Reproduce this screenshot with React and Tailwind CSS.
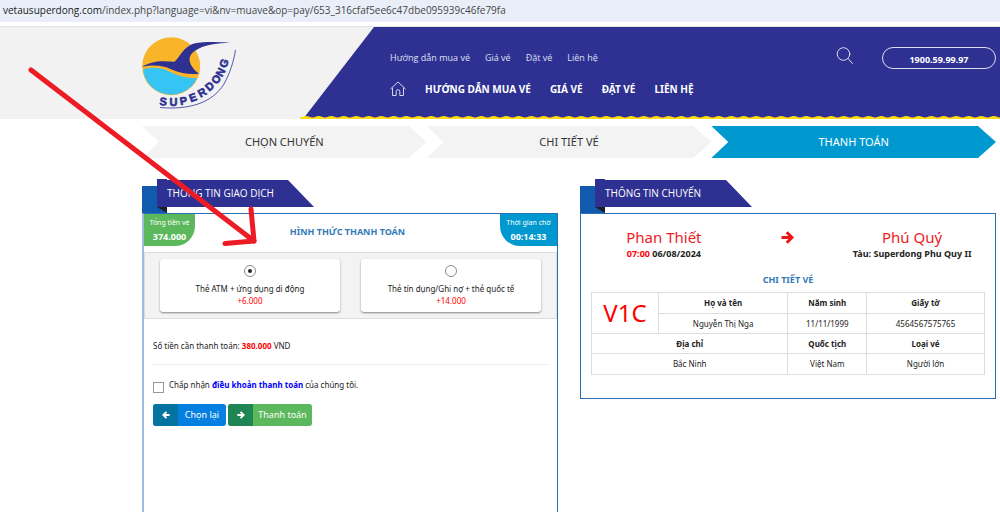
import React from "react";

function Logo() {
  return (
    <svg viewBox="0 0 120 85" className="h-[85px] w-[120px]" role="img" aria-label="Superdong">
      <defs>
        <clipPath id="sun">
          <circle cx="41.2" cy="36.3" r="28.4" />
        </clipPath>
      </defs>
      <circle cx="41.2" cy="36.3" r="29" fill="#f9b52a" />
      <path
        clipPath="url(#sun)"
        d="M10 41 C18 37 28 36.500 37 40.500 C46 45 55 48.500 67.500 48.200 L72 48 L66 72 L8 72 Z"
        fill="#35c4f3"
      />
      <path
        d="M12 36.800 C20 32 29 30 44.500 31.800 C50 27 53 17 64 13.500 C74 11.500 88 11.800 99.800 12.600 C88 13.700 77 14.500 69 18.500 C56 24.500 57 34 69 43.800 C58 45 49 42.500 41 39.200 C33 35.500 24 34.500 12 36.800 Z"
        fill="#2e3192"
      />
      <path
        d="M30 77.500 C58 80 82 73.500 94 54 C100 43 103.500 32 105.500 20"
        fill="none"
        stroke="#2e3192"
        strokeWidth=".8"
      />
      <text
        x="29.2 39.600 50.600 60.800 70.500 79.200 86.500 92 96.200"
        y="75 76 75.200 72.200 67.800 61.800 55 47.500 38.500"
        rotate="5 0 -10 -20 -30 -42 -52 -62 -72"
        fill="#2e3192"
        stroke="#2e3192"
        strokeWidth=".6"
        className="font-['Liberation_Sans_Narrow','Liberation_Sans',sans-serif] text-[11px] font-bold"
      >
        SUPERDONG
      </text>
    </svg>
  );
}

function HomeIcon() {
  return (
    <svg viewBox="0 0 16 16" className="size-4" fill="none" stroke="#d5d6ee" strokeWidth="1" strokeLinejoin="round" strokeLinecap="round">
      <path d="M.7 7.800 8 1 15.300 7.800" />
      <path d="M2.500 7v7.500h3.700V10.500a1.800 1.800 0 0 1 3.600 0V14.500h3.700V7" />
    </svg>
  );
}

function SearchIcon() {
  return (
    <svg viewBox="0 0 18 18" className="size-[18px]" fill="none" stroke="#dcdcf2" strokeWidth="1" strokeLinecap="round">
      <circle cx="7.500" cy="7" r="6.300" />
      <path d="M12 11.500 16.500 16.500" />
    </svg>
  );
}

function BoldArrow({ className }) {
  return (
    <svg viewBox="0 0 12 12" className={className} fill="none" stroke="currentColor" strokeWidth="2.8">
      <path d="M.5 6H10M5.300 1.200 10.100 6 5.300 10.800" />
    </svg>
  );
}

function WaveStrip() {
  return (
    <svg className="absolute bottom-0 left-[300px] right-0 h-[3px] w-full" aria-hidden="true">
      <defs>
        <pattern id="wave" width="12.5" height="3" patternUnits="userSpaceOnUse">
          <path d="M0 1.500 C2.500 1.500 3.500 0 6.250 0 C9 0 10 1.500 12.500 1.500 V3 H0 Z" fill="#fddc10" />
        </pattern>
      </defs>
      <rect width="100%" height="3" fill="url(#wave)" />
    </svg>
  );
}

function Header() {
  const small = ["Hướng dẫn mua vé", "Giá vé", "Đặt vé", "Liên hệ"];
  const main = ["HƯỚNG DẪN MUA VÉ", "GIÁ VÉ", "ĐẶT VÉ", "LIÊN HỆ"];
  return (
    <header className="relative flex h-[93px] overflow-hidden border-t border-[#e2e2e2] bg-[#f2f2f2]">
      <a href="#home" className="w-[303px] shrink-0 pl-[130px] pt-[3px]">
        <Logo />
      </a>
      <div className="flex flex-1 justify-between bg-[#2e3192] pl-[87px] pr-1 text-white [clip-path:polygon(71px_0,100%_0,100%_100%,0_100%)]">
        <nav className="flex flex-col pt-[23px]">
          <ul className="flex h-4 items-center gap-[15px] font-['Open_Sans','Noto_Sans',sans-serif] text-[9px] text-[#dfe0f2]">
            {small.map((t) => (
              <li key={t}>
                <a href="#menu">{t}</a>
              </li>
            ))}
          </ul>
          <ul className="mt-[15px] flex h-4 items-center gap-[19px] text-[10px] font-bold">
            <li>
              <a href="#home" aria-label="Trang chủ">
                <HomeIcon />
              </a>
            </li>
            {main.map((t) => (
              <li key={t}>
                <a href="#menu">{t}</a>
              </li>
            ))}
          </ul>
        </nav>
        <div className="flex items-start gap-7 pt-5">
          <button type="button" aria-label="Tìm kiếm">
            <SearchIcon />
          </button>
          <a
            href="tel:1900599997"
            className="flex h-[22px] w-[114px] items-center justify-center rounded-full border border-[#dcdcf2] pt-1 text-[9px] font-bold"
          >
            1900.59.99.97
          </a>
        </div>
      </div>
      <WaveStrip />
    </header>
  );
}

function Steps() {
  const steps = [
    ["CHỌN CHUYẾN", "bg-[#f3f3f3] text-[#333]"],
    ["CHI TIẾT VÉ", "bg-[#f3f3f3] text-[#333]"],
    ["THANH TOÁN", "bg-[#0099cf] text-white"],
  ];
  return (
    <ol className="grid grid-cols-3">
      {steps.map(([t, c]) => (
        <li
          key={t}
          className={
            "flex h-8 items-center justify-center text-[11px] [clip-path:polygon(0_0,calc(100%_-_18px)_0,100%_50%,calc(100%_-_18px)_100%,0_100%,17px_50%)] " + c
          }
        >
          {t}
        </li>
      ))}
    </ol>
  );
}

function Ribbon({ children }) {
  return (
    <div className="flex h-[34px] items-end">
      <div className="h-[27px] w-[15px] bg-[#125aad]" />
      <div className="self-start">
        <h2 className="flex h-7 w-[157px] items-center bg-[#2e3192] pl-[10px] font-['Open_Sans','Noto_Sans',sans-serif] text-[10px] text-white [clip-path:polygon(0_0,10px_0,10px_1px,131px_1px,100%_100%,0_100%)]">
          {children}
        </h2>
        <div className="flex h-[6px] w-[10px] bg-[#125aad]">
          <div className="w-full bg-[#1d1d25] [clip-path:polygon(0_0,100%_0,100%_100%)]" />
        </div>
      </div>
    </div>
  );
}

function PayOption({ name, fee, checked }) {
  return (
    <label className="flex h-[53px] flex-1 flex-col items-center rounded-[3px] bg-white pt-[6px] text-[8px] shadow-[0_1px_2px_rgba(0,0,0,0.45)]">
      <input
        type="radio"
        name="method"
        defaultChecked={checked}
        className="grid size-3 appearance-none place-content-center rounded-full border border-[#8a8a8a] bg-white before:size-1 before:rounded-full checked:before:bg-[#222]"
      />
      <span className="mt-[6px] h-3 leading-3">{name}</span>
      <span className="h-3 leading-3 text-[#ff0000]">{fee}</span>
    </label>
  );
}

function Payment() {
  return (
    <section className="flex flex-col">
      <Ribbon>THÔNG TIN GIAO DỊCH</Ribbon>
      <div className="flex-1 border-l-2 border-r border-t border-l-[#9dbce0] border-r-[#2a6fb5] border-t-[#2a6fb5]">
        <div className="flex h-8 justify-between">
          <div className="flex w-[51px] flex-col items-center rounded-br-[20px] bg-[#5cb85c] pt-[2px] text-white">
            <span className="text-[7px] leading-[14px]">Tổng tiền vé</span>
            <b className="text-[9px] leading-[14px]">374.000</b>
          </div>
          <h3 className="self-center pt-1 text-[9px] font-bold text-[#337ab7]">HÌNH THỨC THANH TOÁN</h3>
          <div className="flex w-[57px] flex-col items-center rounded-bl-[20px] bg-[#0099cf] pt-[2px] text-white">
            <span className="text-[7px] leading-[14px]">Thời gian chờ</span>
            <b className="text-[9px] leading-[14px]">00:14:33</b>
          </div>
        </div>
        <div className="mt-[6px] flex gap-[21px] border border-[#ddd] bg-[#f3f3f3] px-[15px] py-[6px]">
          <PayOption name="Thẻ ATM + ứng dụng di động" fee="+6.000" checked />
          <PayOption name="Thẻ tín dụng/Ghi nợ + thẻ quốc tế" fee="+14.000" />
        </div>
        <div className="px-[9px] pt-[21px] text-[8px]">
          <p className="h-3 leading-3">
            Số tiền cần thanh toán: <b className="text-[#ff0000]">380.000</b> VND
          </p>
          <hr className="mt-3 border-[#eee]" />
          <div className="mt-[14px] flex h-4 gap-[5px]">
            <input id="agree" type="checkbox" className="mt-[3px] size-[11px] appearance-none border border-[#999] bg-white checked:bg-[#555]" />
            <label htmlFor="agree" className="leading-3">
              Chấp nhận{" "}
              <a href="#terms" className="font-bold text-[#0000ff]">
                điều khoản thanh toán
              </a>{" "}
              của chúng tôi.
            </label>
          </div>
          <div className="mt-[9px] flex gap-[2px] text-[9px] text-white">
            <button type="button" className="flex h-[22px] items-center overflow-hidden rounded-[3px] bg-[#0580e0]">
              <span className="grid h-full w-[25px] place-items-center bg-[#04739f]">
                <BoldArrow className="size-2 rotate-180" />
              </span>
              <span className="w-12 text-center">Chọn lại</span>
            </button>
            <button type="button" className="flex h-[22px] items-center overflow-hidden rounded-[3px] bg-[#5cb85c]">
              <span className="grid h-full w-[25px] place-items-center bg-[#1f8555]">
                <BoldArrow className="size-2" />
              </span>
              <span className="w-[59px] text-center">Thanh toán</span>
            </button>
          </div>
        </div>
      </div>
    </section>
  );
}

function Trip() {
  return (
    <section className="self-start">
      <Ribbon>THÔNG TIN CHUYẾN</Ribbon>
      <div className="border border-[#2a6fb5] px-[10px] pb-[23px] pt-[13px]">
        <div className="grid grid-cols-[37%_26%_37%] text-center text-[9px] font-bold">
          <div>
            <p className="text-[15px] font-normal leading-5 text-[#ed1c24]">Phan Thiết</p>
            <p className="leading-[14px]">
              <span className="text-[#ff0000]">07:00</span> 06/08/2024
            </p>
          </div>
          <div className="flex justify-center pt-1 text-[#f01414]">
            <BoldArrow className="size-[13px]" />
          </div>
          <div>
            <p className="text-[15px] font-normal leading-5 text-[#ed1c24]">Phú Quý</p>
            <p className="leading-[14px]">Tàu: Superdong Phu Quy II</p>
          </div>
        </div>
        <h3 className="mt-3 text-center text-[9px] font-bold leading-[14px] text-[#337ab7]">CHI TIẾT VÉ</h3>
        <table className="mt-[5px] w-full table-fixed border-collapse text-center text-[8px] leading-3 [&_td]:border [&_td]:border-[#ddd] [&_th]:border [&_th]:border-[#ddd]">
          <colgroup>
            <col className="w-[17%]" />
            <col className="w-[33%]" />
            <col className="w-[20%]" />
            <col className="w-[30%]" />
          </colgroup>
          <tbody>
            <tr className="h-[21px]">
              <td rowSpan={2} className="text-[24px] leading-6 text-[#ff0000]">V1C</td>
              <th>Họ và tên</th>
              <th>Năm sinh</th>
              <th>Giấy tờ</th>
            </tr>
            <tr className="h-5">
              <td>Nguyễn Thị Nga</td>
              <td>11/11/1999</td>
              <td>4564567575765</td>
            </tr>
            <tr className="h-5">
              <th colSpan={2}>Địa chỉ</th>
              <th>Quốc tịch</th>
              <th>Loại vé</th>
            </tr>
            <tr className="h-[21px]">
              <td colSpan={2}>Bắc Ninh</td>
              <td>Việt Nam</td>
              <td>Người lớn</td>
            </tr>
          </tbody>
        </table>
      </div>
    </section>
  );
}

function PointerArrow() {
  return (
    <svg
      className="pointer-events-none absolute left-0 top-0 h-[260px] w-[270px]"
      viewBox="0 0 270 260"
      fill="none"
      stroke="#ed1c24"
      strokeWidth="5"
      strokeLinecap="round"
      strokeLinejoin="round"
      aria-hidden="true"
    >
      <path d="M31 70 L254 241 L251 209" />
      <path d="M254 241 L225 243.500" />
    </svg>
  );
}

export default function App() {
  return (
    <div className="relative flex min-h-screen flex-col overflow-hidden bg-white font-['Noto_Sans','Open_Sans',sans-serif] text-[#222]">
      <div className="h-[22px] bg-[#e9eef8] px-[3px] font-['Open_Sans','Noto_Sans',sans-serif] text-[10px] leading-5 text-[#474747]">
        <span className="text-[#222]">vetausuperdong.com</span>/index.php?language=vi&amp;nv=muave&amp;op=pay/653_316cfaf5ee6c47dbe095939c46fe79fa
      </div>
      <div className="h-1 bg-white" />
      <Header />
      <main className="flex flex-1 flex-col pl-[142px] pr-1 pt-[7px]">
        <Steps />
        <div className="mt-[21px] grid flex-1 grid-cols-2 gap-[22px]">
          <Payment />
          <Trip />
        </div>
      </main>
      <PointerArrow />
    </div>
  );
}
